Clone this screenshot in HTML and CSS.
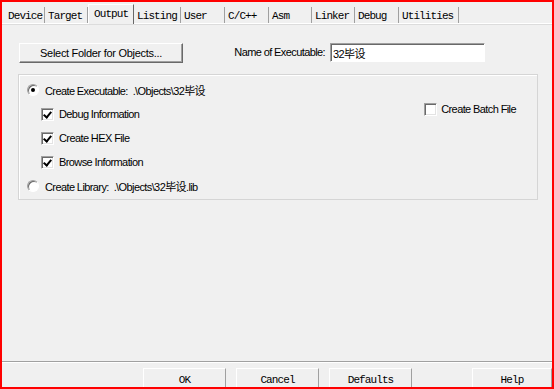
FILE: index.html
```html
<!DOCTYPE html>
<html lang="en">
<head>
    <meta charset="UTF-8">
    <title>Options for Target - Output</title>
    <link rel="stylesheet" href="styles.css">
</head>
<body>
<div class="frame">
    <div class="tabs">
        <div class="tab tab-device">Device</div>
        <div class="tab tab-target">Target</div>
        <div class="tab tab-output active">Output</div>
        <div class="tab tab-listing">Listing</div>
        <div class="tab tab-user">User</div>
        <div class="tab tab-cc">C/C++</div>
        <div class="tab tab-asm">Asm</div>
        <div class="tab tab-linker">Linker</div>
        <div class="tab tab-debug">Debug</div>
        <div class="tab tab-utils">Utilities</div>
    </div>

    <div class="panel">
        <div class="top-row">
            <button type="button" class="btn btn-folder">Select Folder for Objects...</button>
            <label for="exeName" class="field-label">Name of Executable:</label>
            <input type="text" id="exeName" class="field-input" value="32毕设">
        </div>

        <div class="group">
            <div class="options">
                <div class="opt">
                    <span class="radio checked"></span>
                    <span class="opt-text">Create Executable:&nbsp; .\Objects\32毕设</span>
                </div>
                <div class="opt sub">
                    <span class="check checked"></span>
                    <span class="opt-text">Debug Information</span>
                </div>
                <div class="opt sub">
                    <span class="check checked"></span>
                    <span class="opt-text">Create HEX File</span>
                </div>
                <div class="opt sub">
                    <span class="check checked"></span>
                    <span class="opt-text">Browse Information</span>
                </div>
                <div class="opt">
                    <span class="radio"></span>
                    <span class="opt-text">Create Library:&nbsp; .\Objects\32毕设.lib</span>
                </div>
            </div>
            <div class="batch">
                <div class="opt">
                    <span class="check"></span>
                    <span class="opt-text">Create Batch File</span>
                </div>
            </div>
        </div>
    </div>

    <div class="footer">
        <button type="button" class="dlg-btn">OK</button>
        <button type="button" class="dlg-btn">Cancel</button>
        <button type="button" class="dlg-btn">Defaults</button>
        <button type="button" class="dlg-btn btn-help">Help</button>
    </div>
</div>
</body>
</html>
```

FILE: styles.css
```css
html, body {
    margin: 0;
    padding: 0;
}
body {
    background-color: #f0f0f0;
    font-family: "Liberation Sans", "Noto Sans CJK SC", sans-serif;
    font-size: 11px;
    letter-spacing: -0.6px;
    color: #000;
}
.frame {
    box-sizing: border-box;
    width: 554px;
    height: 389px;
    border: 2px solid #ff0000;
    display: flex;
    flex-direction: column;
    overflow: hidden;
}

/* tab strip */
.tabs {
    box-sizing: border-box;
    height: 22px;
    flex-shrink: 0;
    display: flex;
    align-items: flex-end;
    padding-left: 3px;
    border-bottom: 1px solid #fff;
    box-shadow: 0 1px 0 #dcdcdc;
}
.tab {
    box-sizing: border-box;
    height: 16px;
    padding: 2px 0 0 3px;
    font-family: "Liberation Mono", "Noto Sans CJK SC", monospace;
    font-size: 11px;
    letter-spacing: -0.9px;
    line-height: 14px;
    border-right: 1px solid #a0a0a0;
    white-space: nowrap;
}
.tab.active {
    height: 20px;
    margin-bottom: -1px;
    padding: 2px 0 0 5px;
    line-height: 14px;
    background-color: #f0f0f0;
    border-top: 1px solid #fff;
    border-left: 1px solid #fff;
    border-right: 1px solid #696969;
}
.tab-device { width: 40px; }
.tab-target { width: 43px; }
.tab-output { width: 46px; }
.tab-listing { width: 47px; }
.tab-user { width: 44px; }
.tab-cc { width: 44px; }
.tab-asm { width: 43px; }
.tab-linker { width: 43px; }
.tab-debug { width: 44px; }
.tab-utils { width: 60px; }

/* main page */
.panel {
    flex: 1;
    padding: 19px 15px 0 16px;
}
.top-row {
    display: flex;
    align-items: flex-start;
}
.btn {
    font-family: inherit;
    font-size: 11px;
    letter-spacing: -0.3px;
    color: #000;
    background-color: #f0f0f0;
    padding: 0;
    cursor: pointer;
}
.btn-folder {
    box-sizing: border-box;
    width: 164px;
    height: 20px;
    margin-left: 1px;
    border: 1px solid;
    border-color: #fff #696969 #696969 #fff;
    box-shadow: inset -1px -1px 0 #a0a0a0;
}
.field-label {
    flex: 1;
    text-align: right;
    line-height: 19px;
    padding-right: 5px;
}
.field-input {
    box-sizing: border-box;
    width: 155px;
    height: 19px;
    margin-right: 52px;
    padding: 0 2px;
    font-family: "Liberation Sans", "Noto Sans CJK SC", sans-serif;
    font-size: 11px;
    letter-spacing: -0.6px;
    border: 1px solid;
    border-color: #a0a0a0 #fff #fff #a0a0a0;
    box-shadow: inset 1px 1px 0 #696969;
    background-color: #fff;
    outline: none;
}

.group {
    box-sizing: border-box;
    width: 520px;
    height: 126px;
    margin-top: 11px;
    border: 1px solid #d5d5d5;
    box-shadow: inset 1px 1px 0 #fff;
    display: flex;
    padding: 3px 0 0 8px;
}
.options {
    flex: 1;
}
.opt {
    height: 24px;
    display: flex;
    align-items: center;
    white-space: pre;
}
.opt.sub {
    margin-left: 14px;
}
.batch {
    margin-right: 21px;
    padding-top: 23px;
}
.batch .opt {
    height: 16px;
}
.batch .check {
    margin-right: 4px;
}

.radio {
    box-sizing: border-box;
    width: 12px;
    height: 12px;
    margin-right: 6px;
    border-radius: 50%;
    border: 1px solid;
    border-color: #a0a0a0 #fff #fff #a0a0a0;
    background-color: #fff;
    box-shadow: inset 1px 1px 0 #696969;
    position: relative;
}
.radio.checked::after {
    content: "";
    position: absolute;
    left: 3px;
    top: 3px;
    width: 4px;
    height: 4px;
    border-radius: 50%;
    background-color: #000;
}
.check {
    box-sizing: border-box;
    width: 13px;
    height: 13px;
    margin-right: 5px;
    border: 1px solid;
    border-color: #a0a0a0 #fff #fff #a0a0a0;
    background-color: #fff;
    box-shadow: inset 1px 1px 0 #696969, inset -1px -1px 0 #e3e3e3;
    position: relative;
}
.check.checked::after {
    content: "";
    position: absolute;
    left: 3px;
    top: 1px;
    width: 3px;
    height: 6px;
    border: solid #000;
    border-width: 0 2px 2px 0;
    transform: rotate(40deg);
}

/* dialog buttons */
.footer {
    box-sizing: border-box;
    height: 26px;
    flex-shrink: 0;
    border-top: 1px solid #a0a0a0;
    box-shadow: inset 0 1px 0 #fff;
    display: flex;
    align-items: flex-start;
    gap: 10px;
    padding: 6px 0 0 141px;
}
.dlg-btn {
    box-sizing: border-box;
    flex-shrink: 0;
    width: 83px;
    height: 22px;
    padding: 1px 0 0 0;
    font-family: "Liberation Mono", "Noto Sans CJK SC", monospace;
    font-size: 11px;
    letter-spacing: -0.9px;
    color: #000;
    background-color: #f0f0f0;
    border: 1px solid;
    border-color: #fff #a0a0a0 #a0a0a0 #fff;
    cursor: pointer;
}
.btn-help {
    width: 80px;
    margin-left: auto;
}
```
